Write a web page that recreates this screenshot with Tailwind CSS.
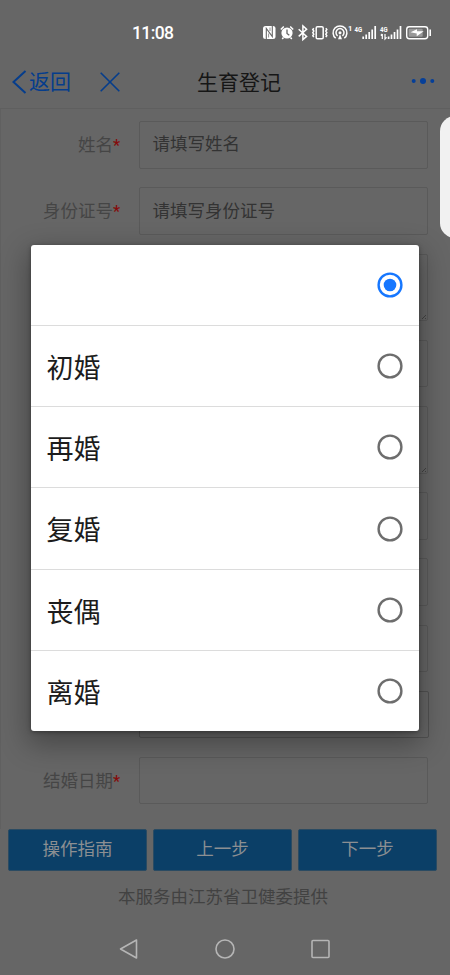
<!DOCTYPE html>
<html lang="zh-CN">
<head>
<meta charset="utf-8">
<title>生育登记</title>
<script src="https://cdn.jsdelivr.net/npm/@tailwindcss/browser@4"></script>
</head>
<body class="bg-[#666]">
<div class="relative w-[450px] h-[975px] overflow-hidden bg-[#666] flex flex-col font-['Noto_Sans_CJK_SC',sans-serif] font-normal text-[#424242]">

  <!-- status bar -->
  <div class="h-[54px] shrink-0 flex items-center justify-between pl-[132px] pr-[18px] pt-[11px] text-white">
    <span class="font-['Roboto',sans-serif] font-medium text-[17.5px] leading-5 tracking-[-0.6px]">11:08</span>
    <svg width="170" height="20" viewBox="262 23 170 20" fill="none" stroke="#fff" stroke-width="1.5">
      <rect x="263" y="26" width="12.5" height="13" rx="2.5" fill="#fff" stroke="none"/>
      <path d="M266.300 39.500V28.500l6 8V25.500" stroke="#666" stroke-width="1.100"/>
      <path d="M268.600 37.500v-4M270 27.500v3.500" stroke="#666" stroke-width="0.700"/>
      <circle cx="287" cy="33" r="5.600" fill="#fff" stroke="none"/>
      <path d="M280.800 29.500l3-3M293.200 29.500l-3-3M283.500 37.500l-1.300 1.500M290.500 37.500l1.300 1.500"/>
      <path d="M287 29.500v4l2.300 1.800" stroke="#666" stroke-width="1.300"/>
      <path d="M298.700 29.200l7.900 7.200-3.700 3.200V26l3.700 3.200-7.900 7.200" stroke-width="1.500"/>
      <rect x="316.200" y="26.800" width="7" height="12" rx="1.300" stroke-width="1.500"/>
      <path d="M313.800 28.300l-1 1.200 1 1.500-1 1.700 1 1.500-1 1.500 1 1.500M325.800 28.300l1 1.200-1 1.500 1 1.700-1 1.500 1 1.500-1 1.500" stroke-width="1.500"/>
      <path d="M335.700 38.200a6.900 6.900 0 1 1 8.600 0M337.600 35.800a4 4 0 1 1 4.800 0" stroke-width="1.500"/>
      <circle cx="340" cy="32.700" r="1.500" fill="#fff" stroke="none"/>
      <path d="M340 34.300l2 4.900h-4z" fill="#fff" stroke="none"/>
      <g fill="#fff" stroke="none" font-family="Roboto" font-weight="700" font-size="7.500">
        <text x="347.900" y="31.300">1</text>
        <text x="354.600" y="31.800" textLength="7.600" lengthAdjust="spacingAndGlyphs">4G</text>
        <text x="380" y="31.800" textLength="7.600" lengthAdjust="spacingAndGlyphs">4G</text>
      </g>
      <path d="M363.200 39v-2.500M366.200 39v-4.500M369.200 39v-7M372.200 39v-9.500M375.200 39V26M388.600 39v-2.500M391.500 39v-4.500M394.500 39v-7M397.500 39v-9.500M400.500 39V26" stroke-width="1.700"/>
      <path d="M382.300 34v5M380.800 35.500l1.500-1.500M385 34v5l1.600-1.600" stroke-width="1.200"/>
      <rect x="406.700" y="26.700" width="21" height="12" rx="2.700" stroke-width="1.400"/>
      <rect x="408.700" y="28.700" width="14" height="8" rx="1" fill="#999" stroke="none"/>
      <path d="M410.500 32.300l6.500-3v2h6.700l-7 5v-2.900z" fill="#fff" stroke="none"/>
      <path d="M430.200 29.500v6.500" stroke-width="1.600"/>
    </svg>
  </div>

  <!-- navigation bar -->
  <div class="h-[55px] shrink-0 flex items-center pl-[12px] pr-[15px] border-b border-[#5f5f5f] text-[21px] leading-6">
    <div class="w-[185px] flex items-center text-[#053d8c]">
      <svg class="mt-px" width="15" height="24" viewBox="0 0 15 24" fill="none" stroke="currentColor" stroke-width="2"><path d="M13.500 1L1.500 12l12 11"/></svg>
      <span class="ml-[2px] -mt-[2px]">返回</span>
      <svg class="ml-[29px] mt-px" width="20" height="20" viewBox="0 0 20 20" fill="none" stroke="currentColor" stroke-width="1.600"><path d="M.7.7l18.600 18.600M19.300.7L.7 19.300"/></svg>
    </div>
    <h1 class="flex-1 text-[#161616] -mt-px">生育登记</h1>
    <svg width="24" height="8" viewBox="0 0 24 8" fill="#053f99"><circle cx="2.700" cy="4" r="2"/><circle cx="12" cy="4" r="3"/><circle cx="21.300" cy="4" r="2"/></svg>
  </div>

  <!-- form -->
  <form class="h-[720px] shrink-0 flex flex-col gap-[18.700px] pt-[12.300px] pr-[22px] border-l border-[#606060] text-[17.5px]">
    <div class="flex h-[47.500px] items-center"><label class="w-[119px] mr-[18.500px] -mt-px text-right text-[#454545]">姓名<span class="font-['Roboto',sans-serif] font-medium text-[16px] text-[#850b0b]">*</span></label><div class="flex-1 h-full border border-[#5a5a5a] rounded-[2px] pl-[13px] flex items-center text-[#333] pb-[3px]">请填写姓名</div></div>
    <div class="flex h-[47.500px] items-center"><label class="w-[119px] mr-[18.500px] -mt-px text-right text-[#454545]">身份证号<span class="font-['Roboto',sans-serif] font-medium text-[16px] text-[#850b0b]">*</span></label><div class="flex-1 h-full border border-[#5a5a5a] rounded-[2px] pl-[13px] flex items-center text-[#333] pb-[3px]">请填写身份证号</div></div>
    <div class="ml-[137.500px] h-[67.500px] border border-[#5a5a5a] rounded-[2px] flex items-end justify-end"><svg width="5" height="5" stroke="#444"><path d="M0 4L4 0M3 4l1-1"/></svg></div>
    <div class="ml-[137.500px] h-[47.500px] border border-[#5a5a5a] rounded-[2px]"></div>
    <div class="ml-[137.500px] h-[67.500px] border border-[#5a5a5a] rounded-[2px] flex items-end justify-end"><svg width="5" height="5" stroke="#444"><path d="M0 4L4 0M3 4l1-1"/></svg></div>
    <div class="ml-[137.500px] h-[47.500px] border border-[#5a5a5a] rounded-[2px]"></div>
    <div class="ml-[137.500px] h-[47.500px] border border-[#5a5a5a] rounded-[2px]"></div>
    <div class="ml-[137.500px] h-[47.500px] border border-[#5a5a5a] rounded-[2px]"></div>
    <div class="ml-[137.500px] -mr-px h-[47.500px] border border-[#525252] rounded-[2px]"></div>
    <div class="flex h-[47.500px] items-center"><label class="w-[119px] mr-[18.500px] -mt-px text-right text-[#454545]">结婚日期<span class="font-['Roboto',sans-serif] font-medium text-[16px] text-[#850b0b]">*</span></label><div class="flex-1 h-full border border-[#5a5a5a] rounded-[2px]"></div></div>
  </form>

  <div class="h-[41.500px] shrink-0 flex gap-[6px] pt-[.4px] pl-[8px] pr-[13px] text-[17.5px] text-[#8c8f92]">
    <div class="flex-1 bg-[#0b3f67] border border-[#2b4b62] rounded-[2px] flex items-center justify-center pb-[3px]">操作指南</div>
    <div class="flex-1 bg-[#0b3f67] border border-[#2b4b62] rounded-[2px] flex items-center justify-center pb-[3px]">上一步</div>
    <div class="flex-1 bg-[#0b3f67] border border-[#2b4b62] rounded-[2px] flex items-center justify-center pb-[3px]">下一步</div>
  </div>

  <div class="h-[51.500px] shrink-0 text-center text-[17.5px] leading-[50px] pr-[4px]">本服务由江苏省卫健委提供</div>

  <!-- system navigation -->
  <div class="h-[53px] shrink-0 flex items-center justify-center gap-[76px] text-[#b5b5b5]">
    <svg width="20" height="22" viewBox="0 0 20 22" fill="none" stroke="currentColor" stroke-width="1.600" stroke-linejoin="round"><path d="M17.500 2v18L1.500 11z"/></svg>
    <svg width="20" height="20" viewBox="0 0 20 20" fill="none" stroke="currentColor" stroke-width="1.600"><circle cx="10" cy="10" r="9"/></svg>
    <svg width="20" height="20" viewBox="0 0 20 20" fill="none" stroke="currentColor" stroke-width="1.600"><rect x="1" y="1.500" width="17" height="17" rx="1"/></svg>
  </div>

  <!-- edge panel handle -->
  <div class="absolute left-[440px] top-[116px] w-[30px] h-[122px] rounded-[16px] bg-[#f1f1f1]"></div>

  <!-- marital status picker -->
  <div class="absolute left-[31px] top-[245px] w-[388px] h-[486px] rounded-[3px] bg-white shadow-[0_10px_28px_4px_rgba(0,0,0,0.3),0_1px_4px_rgba(0,0,0,0.35)] grid grid-rows-[81px_81px_81px_82px_81px_80px] divide-y divide-[#dcdcdc] text-[27px] text-[#1c1c1c]">
    <div class="flex items-center justify-end pr-[16px]"><svg width="26" height="26" viewBox="0 0 26 26" fill="none" stroke="#1677ff" stroke-width="2.400"><circle cx="13" cy="13" r="11.400"/><circle cx="13" cy="13" r="6.300" fill="#1677ff" stroke="none"/></svg></div>
    <div class="flex items-center justify-between pl-[15.500px] pr-[16px]"><span class="pt-[2px]">初婚</span><svg width="26" height="26" viewBox="0 0 26 26" fill="none" stroke="#6d6d6d" stroke-width="2.400"><circle cx="13" cy="13" r="11.400"/></svg></div>
    <div class="flex items-center justify-between pl-[15.500px] pr-[16px]"><span class="pt-[2px]">再婚</span><svg width="26" height="26" viewBox="0 0 26 26" fill="none" stroke="#6d6d6d" stroke-width="2.400"><circle cx="13" cy="13" r="11.400"/></svg></div>
    <div class="flex items-center justify-between pl-[15.500px] pr-[16px]"><span class="pt-[2px]">复婚</span><svg width="26" height="26" viewBox="0 0 26 26" fill="none" stroke="#6d6d6d" stroke-width="2.400"><circle cx="13" cy="13" r="11.400"/></svg></div>
    <div class="flex items-center justify-between pl-[15.500px] pr-[16px]"><span class="pt-[2px]">丧偶</span><svg width="26" height="26" viewBox="0 0 26 26" fill="none" stroke="#6d6d6d" stroke-width="2.400"><circle cx="13" cy="13" r="11.400"/></svg></div>
    <div class="flex items-center justify-between pl-[15.500px] pr-[16px]"><span class="pt-[2px]">离婚</span><svg width="26" height="26" viewBox="0 0 26 26" fill="none" stroke="#6d6d6d" stroke-width="2.400"><circle cx="13" cy="13" r="11.400"/></svg></div>
  </div>
</div>
</body>
</html>
